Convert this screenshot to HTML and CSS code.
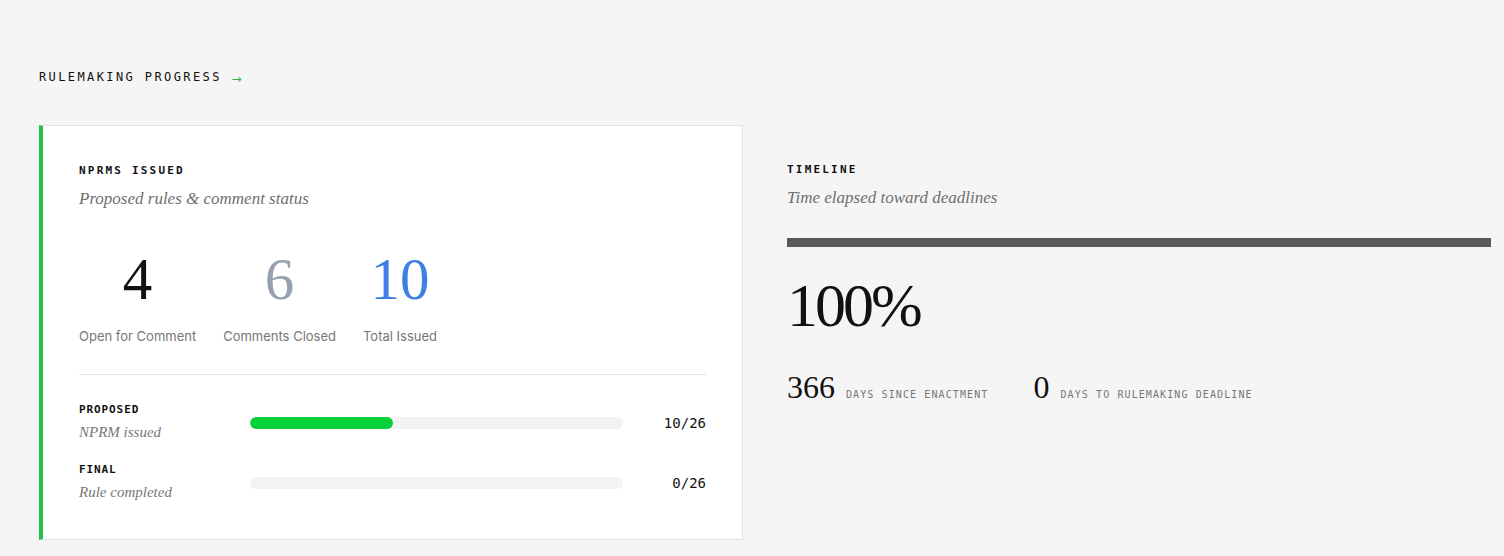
FILE: index.html
```html
<!DOCTYPE html>
<html lang="en">
<head>
    <meta charset="UTF-8">
    <title>Rulemaking Progress</title>
    <link rel="stylesheet" href="styles.css">
</head>
<body>
    <section class="page">
        <h2 class="section-title">Rulemaking Progress <span class="arrow">&rarr;</span></h2>

        <div class="columns">
            <!-- NPRM card -->
            <div class="card">
                <h3 class="eyebrow">NPRMs Issued</h3>
                <p class="subtitle">Proposed rules &amp; comment status</p>

                <div class="stats">
                    <div class="stat">
                        <div class="stat-number">4</div>
                        <div class="stat-label">Open for Comment</div>
                    </div>
                    <div class="stat">
                        <div class="stat-number muted">6</div>
                        <div class="stat-label">Comments Closed</div>
                    </div>
                    <div class="stat">
                        <div class="stat-number blue">10</div>
                        <div class="stat-label">Total Issued</div>
                    </div>
                </div>

                <div class="progress-list">
                    <div class="progress-row">
                        <div class="progress-name">
                            <div class="progress-title">Proposed</div>
                            <div class="progress-desc">NPRM issued</div>
                        </div>
                        <div class="track"><div class="fill" style="width: 38.46%"></div></div>
                        <div class="progress-value">10/26</div>
                    </div>
                    <div class="progress-row">
                        <div class="progress-name">
                            <div class="progress-title">Final</div>
                            <div class="progress-desc">Rule completed</div>
                        </div>
                        <div class="track"><div class="fill" style="width: 0%"></div></div>
                        <div class="progress-value">0/26</div>
                    </div>
                </div>
            </div>

            <!-- Timeline -->
            <div class="timeline">
                <h3 class="eyebrow">Timeline</h3>
                <p class="subtitle">Time elapsed toward deadlines</p>

                <div class="time-bar"></div>
                <div class="percent">100%</div>

                <div class="day-counts">
                    <div class="day-count">
                        <span class="day-number">366</span>
                        <span class="day-label">Days since enactment</span>
                    </div>
                    <div class="day-count">
                        <span class="day-number">0</span>
                        <span class="day-label">Days to rulemaking deadline</span>
                    </div>
                </div>
            </div>
        </div>
    </section>
</body>
</html>
```

FILE: styles.css
```css
/* Base */
body {
    background-color: #f5f5f5;
    color: #111111;
    font-family: Inter, "Noto Sans", sans-serif;
    margin: 0;
}

.page {
    padding: 70px 39px 0;
}

.section-title {
    margin: 0 0 39px;
    font-family: "DejaVu Sans Mono", monospace;
    font-size: 12px;
    line-height: 14px;
    font-weight: 400;
    letter-spacing: 2.4px;
    text-transform: uppercase;
    color: #111111;
}

.section-title .arrow {
    color: #2bb24c;
    font-family: "DejaVu Sans", sans-serif;
    letter-spacing: 0;
    vertical-align: -2px;
}

.columns {
    display: grid;
    grid-template-columns: 704px 704px;
    gap: 44px;
    align-items: start;
}

/* Card */
.card {
    background-color: #ffffff;
    border: 1px solid #e4e4e4;
    border-left: 4px solid #22c24a;
    padding: 38px 36px 37px;
}

.eyebrow {
    margin: 0;
    font-family: "DejaVu Sans Mono", monospace;
    font-size: 11px;
    line-height: 14px;
    font-weight: 700;
    letter-spacing: 2.2px;
    text-transform: uppercase;
    color: #111111;
}

.subtitle {
    margin: 11px 0 0;
    font-family: "Liberation Serif", serif;
    font-style: italic;
    font-size: 17px;
    line-height: 20px;
    color: #6f6f6f;
}

/* Stats */
.stats {
    display: flex;
    gap: 27px;
    margin-top: 41px;
    padding-bottom: 29px;
    border-bottom: 1px solid #e2e2e2;
}

.stat {
    text-align: center;
}

.stat-number {
    font-family: "Liberation Serif", serif;
    font-size: 59px;
    line-height: 58px;
    color: #111111;
}

.stat-number.muted {
    color: #97a1b0;
}

.stat-number.blue {
    color: #3d7fe3;
}

.stat-label {
    margin-top: 19px;
    font-size: 13px;
    line-height: 18px;
    color: #767676;
}

/* Progress rows */
.progress-list {
    margin-top: 28px;
    display: flex;
    flex-direction: column;
    gap: 21px;
}

.progress-row {
    display: grid;
    grid-template-columns: 171px 373px 1fr;
    align-items: center;
}

.progress-title {
    font-family: "DejaVu Sans Mono", monospace;
    font-size: 11px;
    line-height: 14px;
    font-weight: 700;
    letter-spacing: 0.9px;
    text-transform: uppercase;
}

.progress-desc {
    margin-top: 5px;
    font-family: "Liberation Serif", serif;
    font-style: italic;
    font-size: 15px;
    line-height: 20px;
    color: #777777;
}

.track {
    height: 12px;
    border-radius: 6px;
    background-color: #f3f3f3;
    overflow: hidden;
}

.fill {
    height: 100%;
    border-radius: 6px;
    background-color: #06d13b;
}

.progress-value {
    text-align: right;
    font-family: "DejaVu Sans Mono", monospace;
    font-size: 14px;
    color: #111111;
}

/* Timeline */
.timeline {
    padding-top: 38px;
}

.time-bar {
    margin-top: 30px;
    height: 9px;
    background-color: #595959;
}

.percent {
    margin-top: 27px;
    font-family: "Liberation Serif", serif;
    font-size: 62px;
    line-height: 62px;
    letter-spacing: -3px;
    color: #111111;
}

.day-counts {
    display: flex;
    gap: 45px;
    margin-top: 36px;
}

.day-count {
    display: flex;
    align-items: baseline;
    gap: 11px;
}

.day-number {
    font-family: "Liberation Serif", serif;
    font-size: 32px;
    line-height: 30px;
    color: #111111;
}

.day-label {
    font-family: "DejaVu Sans Mono", monospace;
    font-size: 10px;
    letter-spacing: 1.1px;
    text-transform: uppercase;
    color: #777777;
}
```
